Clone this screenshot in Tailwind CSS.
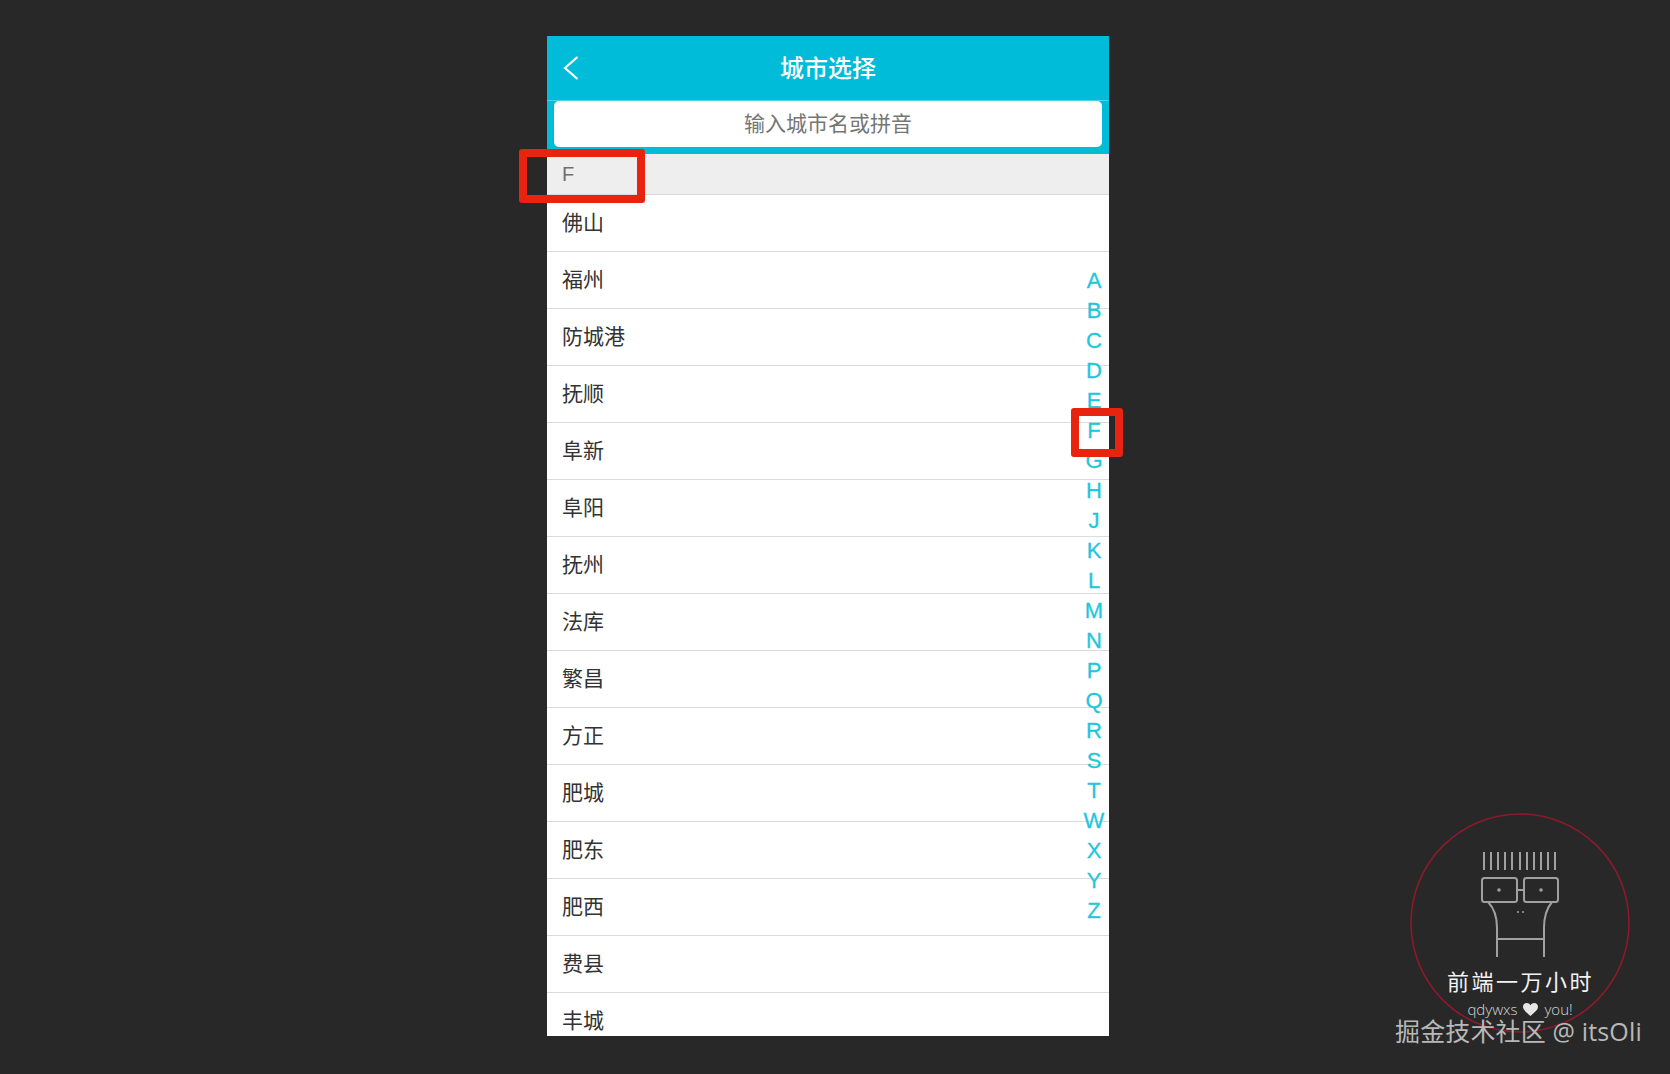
<!DOCTYPE html>
<html lang="zh">
<head>
<meta charset="utf-8">
<script src="https://cdn.jsdelivr.net/npm/@tailwindcss/browser@4"></script>
</head>
<body class="relative w-[1670px] h-[1074px] overflow-hidden bg-[#282828] pt-[36px] pl-[547px] font-['Liberation_Sans','Noto_Sans_CJK_SC',sans-serif]">
<main class="relative w-[562px] h-[1000px] overflow-hidden bg-white flex flex-col">
  <header class="relative h-[64px] shrink-0 bg-[#00bcd9] flex items-center justify-center pt-[2px] text-white text-[24px] font-medium">
    <svg class="absolute left-[15px] top-[19px]" width="18" height="26" viewBox="0 0 18 26" fill="none" stroke="#fff" stroke-width="2.2"><path d="M15.5 2 L3 13 L15.5 24"/></svg>
    <span>城市选择</span>
  </header>
  <div class="h-[54px] shrink-0 bg-[#00bcd9] border-t border-[#4fd3e6] px-[7px]">
    <div class="h-[46px] rounded-[5px] bg-white flex items-center justify-center text-[21px] text-[#757575]">输入城市名或拼音</div>
  </div>
  <div class="h-[41px] shrink-0 bg-[#eeeeee] border-b border-[#d9d9d9] pl-[15px] flex items-center text-[20px] text-[#6e6e6e]">F</div>
  <ul class="text-[21px] text-[#333]">
    <li class="h-[57px] border-b border-[#dcdcdc] pl-[15px] flex items-center">佛山</li>
    <li class="h-[57px] border-b border-[#dcdcdc] pl-[15px] flex items-center">福州</li>
    <li class="h-[57px] border-b border-[#dcdcdc] pl-[15px] flex items-center">防城港</li>
    <li class="h-[57px] border-b border-[#dcdcdc] pl-[15px] flex items-center">抚顺</li>
    <li class="h-[57px] border-b border-[#dcdcdc] pl-[15px] flex items-center">阜新</li>
    <li class="h-[57px] border-b border-[#dcdcdc] pl-[15px] flex items-center">阜阳</li>
    <li class="h-[57px] border-b border-[#dcdcdc] pl-[15px] flex items-center">抚州</li>
    <li class="h-[57px] border-b border-[#dcdcdc] pl-[15px] flex items-center">法库</li>
    <li class="h-[57px] border-b border-[#dcdcdc] pl-[15px] flex items-center">繁昌</li>
    <li class="h-[57px] border-b border-[#dcdcdc] pl-[15px] flex items-center">方正</li>
    <li class="h-[57px] border-b border-[#dcdcdc] pl-[15px] flex items-center">肥城</li>
    <li class="h-[57px] border-b border-[#dcdcdc] pl-[15px] flex items-center">肥东</li>
    <li class="h-[57px] border-b border-[#dcdcdc] pl-[15px] flex items-center">肥西</li>
    <li class="h-[57px] border-b border-[#dcdcdc] pl-[15px] flex items-center">费县</li>
    <li class="h-[57px] border-b border-[#dcdcdc] pl-[15px] flex items-center">丰城</li>
  </ul>
  <nav class="absolute right-0 top-[230px] w-[30px] flex flex-col items-center text-[22px] text-[#1fc6dc] [-webkit-text-stroke:0.3px_#1fc6dc]">
    <span class="h-[30px] leading-[30px]">A</span>
    <span class="h-[30px] leading-[30px]">B</span>
    <span class="h-[30px] leading-[30px]">C</span>
    <span class="h-[30px] leading-[30px]">D</span>
    <span class="h-[30px] leading-[30px]">E</span>
    <span class="h-[30px] leading-[30px]">F</span>
    <span class="h-[30px] leading-[30px]">G</span>
    <span class="h-[30px] leading-[30px]">H</span>
    <span class="h-[30px] leading-[30px]">J</span>
    <span class="h-[30px] leading-[30px]">K</span>
    <span class="h-[30px] leading-[30px]">L</span>
    <span class="h-[30px] leading-[30px]">M</span>
    <span class="h-[30px] leading-[30px]">N</span>
    <span class="h-[30px] leading-[30px]">P</span>
    <span class="h-[30px] leading-[30px]">Q</span>
    <span class="h-[30px] leading-[30px]">R</span>
    <span class="h-[30px] leading-[30px]">S</span>
    <span class="h-[30px] leading-[30px]">T</span>
    <span class="h-[30px] leading-[30px]">W</span>
    <span class="h-[30px] leading-[30px]">X</span>
    <span class="h-[30px] leading-[30px]">Y</span>
    <span class="h-[30px] leading-[30px]">Z</span>
  </nav>
</main>
<div class="absolute left-[519px] top-[149px] w-[126px] h-[54px] border-[8px] border-[#e8230f] rounded-[3px]"></div>
<div class="absolute left-[1071px] top-[408px] w-[52px] h-[49px] border-[8px] border-[#e8230f] rounded-[3px]"></div>
<svg class="absolute left-[1400px] top-[803px]" width="240" height="240" viewBox="0 0 240 240" fill="none" stroke="#a0a0a0" stroke-width="2">
  <circle cx="120" cy="120" r="109" stroke="#8b1a2b" stroke-width="1.6"/>
  <path d="M84 49v18M91 49v18M98 49v18M105 49v18M112 49v18M120 49v18M127 49v18M134 49v18M141 49v18M148 49v18M155 49v18"/>
  <rect x="82" y="75" width="35" height="24" rx="2.5"/>
  <rect x="124" y="75" width="34" height="24" rx="2.5"/>
  <path d="M117 87h7"/>
  <path d="M88 99c6 6 9 14 9 26v29M152 99c-5 6-8 14-8 26v29M97 136h47"/>
  <circle cx="99" cy="87" r="1.8" fill="#a0a0a0" stroke="none"/>
  <circle cx="141" cy="87" r="1.8" fill="#a0a0a0" stroke="none"/>
  <circle cx="118" cy="109" r="1" fill="#a0a0a0" stroke="none"/>
  <circle cx="123" cy="109" r="1" fill="#a0a0a0" stroke="none"/>
</svg>
<div class="absolute left-[1447px] top-[968px] w-[147px] text-center whitespace-nowrap text-[22px] leading-[30px] tracking-[2.5px] text-[#f2f2f2]">前端一万小时</div>
<div class="absolute left-[1465px] top-[999px] w-[110px] flex items-center justify-center gap-[6px] whitespace-nowrap text-[15px] leading-[20px] text-[#d8d8d8] font-['Open_Sans',sans-serif] font-light">
  <span>qdywxs</span>
  <svg width="15" height="13" viewBox="0 0 15 13" fill="#e6e6e6"><path d="M7.5 13 C3 9 0 6.8 0 3.8 C0 1.5 1.8 0 3.8 0 C5.3 0 6.7 .8 7.5 2.2 C8.3 .8 9.7 0 11.2 0 C13.2 0 15 1.5 15 3.8 C15 6.8 12 9 7.5 13Z"/></svg>
  <span>you!</span>
</div>
<div class="absolute left-[1395px] top-[1015px] whitespace-nowrap text-[25px] leading-[32px] tracking-[0.15px] text-[#b8b8b8] font-['Open_Sans','Noto_Sans_CJK_SC',sans-serif]">掘金技术社区 @ itsOli</div>
</body>
</html>
